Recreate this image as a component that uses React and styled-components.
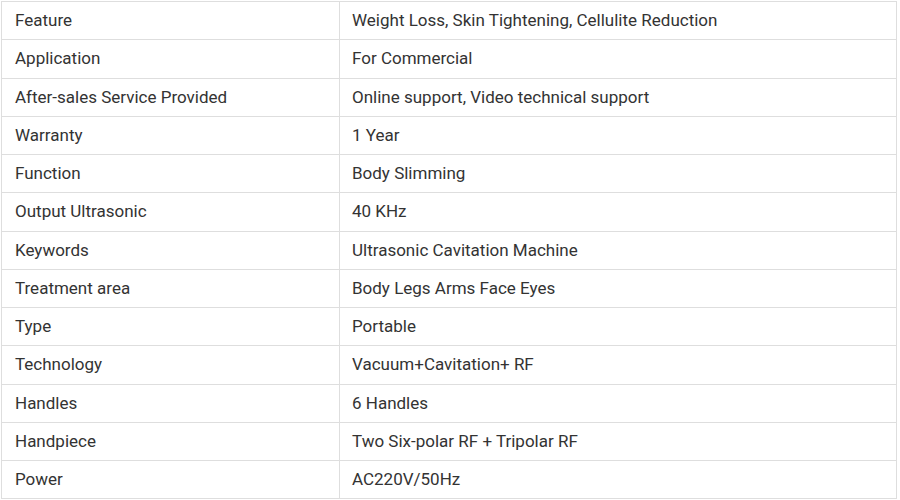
import React from "react";
import styled, { createGlobalStyle } from "styled-components";

const Global = createGlobalStyle`
  html, body { margin: 0; padding: 0; background: #fff; }
  body { font-family: Roboto, "Liberation Sans", Arial, sans-serif; }
`;

const Wrap = styled.div`
  padding: 1px 3px 0 1px;
`;

const Table = styled.table`
  width: 100%;
  border-collapse: collapse;
  table-layout: fixed;
  border: 1px solid #dedede;
`;

const Row = styled.tr`
  height: 38.25px;
`;

const Cell = styled.td`
  border: 1px solid #dedede;
  padding: ${(p) => (p.$label ? "0 12px 1px 13px" : "0 12px 1px 12px")};
  font-size: 17px;
  color: #333;
  vertical-align: middle;
  width: ${(p) => (p.$label ? "312px" : "auto")};
  white-space: nowrap;
`;

const rows = [
  ["Feature", "Weight Loss, Skin Tightening, Cellulite Reduction"],
  ["Application", "For Commercial"],
  ["After-sales Service Provided", "Online support, Video technical support"],
  ["Warranty", "1 Year"],
  ["Function", "Body Slimming"],
  ["Output Ultrasonic", "40 KHz"],
  ["Keywords", "Ultrasonic Cavitation Machine"],
  ["Treatment area", "Body Legs Arms Face Eyes"],
  ["Type", "Portable"],
  ["Technology", "Vacuum+Cavitation+ RF"],
  ["Handles", "6 Handles"],
  ["Handpiece", "Two Six-polar RF + Tripolar RF"],
  ["Power", "AC220V/50Hz"],
];

export default function App() {
  return (
    <>
      <Global />
      <Wrap>
        <Table>
          <tbody>
            {rows.map(([k, v]) => (
              <Row key={k}>
                <Cell $label>{k}</Cell>
                <Cell>{v}</Cell>
              </Row>
            ))}
          </tbody>
        </Table>
      </Wrap>
    </>
  );
}
